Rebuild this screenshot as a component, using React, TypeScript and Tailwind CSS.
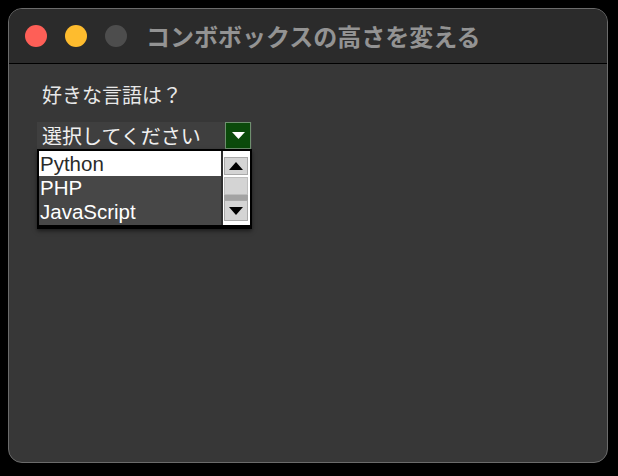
import React from "react";

const jp = { fontFamily: '"Noto Sans CJK JP", "Noto Sans", sans-serif' };
const lat = { fontFamily: '"Liberation Sans", Arial, sans-serif' };

function TriUp({ color = "#000" }: { color?: string }) {
  return (
    <svg width="14" height="8" viewBox="0 0 14 8">
      <polygon points="7,0 14,8 0,8" fill={color} />
    </svg>
  );
}
function TriDown({ color = "#000", w = 14, h = 8 }: { color?: string; w?: number; h?: number }) {
  return (
    <svg width={w} height={h} viewBox={`0 0 ${w} ${h}`}>
      <polygon points={`0,0 ${w},0 ${w / 2},${h}`} fill={color} />
    </svg>
  );
}

export default function App() {
  return (
    <div className="w-[618px] h-[476px] bg-black pt-[8px] pl-[8px]">
      <div className="w-[600px] h-[455px] rounded-[14px] border border-[#6b6b6b] overflow-hidden flex flex-col bg-[#373737]">
        <div className="h-[55px] shrink-0 bg-[#2b2b2b] border-b border-black flex items-center pl-[16px]">
          <div className="flex items-center gap-[18px]">
            <div className="w-[22px] h-[22px] rounded-full bg-[#fe5f57]" />
            <div className="w-[22px] h-[22px] rounded-full bg-[#febc2e]" />
            <div className="w-[22px] h-[22px] rounded-full bg-[#4d4d4d]" />
          </div>
          <div className="ml-[19px] text-[24px] font-bold text-[#939393] leading-none" style={jp}>
            コンボボックスの高さを変える
          </div>
        </div>
        <div className="flex-1 pl-[28px] pt-[17px] flex flex-col items-start">
          <div className="ml-[5px] text-[20px] leading-[28px] text-[#e8e8e8]" style={jp}>
            好きな言語は？
          </div>
          <div className="mt-[13px] w-[215px] h-[27px] bg-[#3f3f3f] flex items-center justify-between">
            <span className="pl-[5px] text-[20px] leading-none text-[#f0f0f0]" style={jp}>
              選択してください
            </span>
            <div className="w-[26px] h-[27px] mr-[1px] border border-[#6f8f6f] bg-[#0b4a0b] flex items-center justify-center">
              <TriDown color="#ffffff" w={13} h={7} />
            </div>
          </div>
          <div className="w-[215px] h-[80px] border-2 border-black border-b-[4px] bg-[#2f2f2f] flex shadow-[0_2px_4px_rgba(0,0,0,0.5)]">
            <div className="w-[182px] bg-[#474747] flex flex-col text-[20.5px]" style={lat}>
              <div className="h-[25px] leading-[25px] bg-white text-[#2a2a2a] pl-[1px]">Python</div>
              <div className="h-[24px] leading-[24px] text-white pl-[1px]">PHP</div>
              <div className="h-[24px] leading-[24px] text-white pl-[1px]">JavaScript</div>
            </div>
            <div className="ml-[2px] w-[27px] bg-white pl-[1px] pr-[2px] pt-[6px] flex flex-col">
              <div className="h-[18px] bg-[#d4d4d4] border border-[#a9a9a9] flex items-center justify-center">
                <TriUp />
              </div>
              <div className="mt-[2px] h-[18px] bg-[#d4d4d4] border border-[#bdbdbd]" />
              <div className="h-[5px] bg-[#a3a3a3]" />
              <div className="h-[21px] bg-[#d4d4d4] border border-[#a9a9a9] flex items-center justify-center">
                <TriDown />
              </div>
            </div>
          </div>
        </div>
      </div>
    </div>
  );
}
